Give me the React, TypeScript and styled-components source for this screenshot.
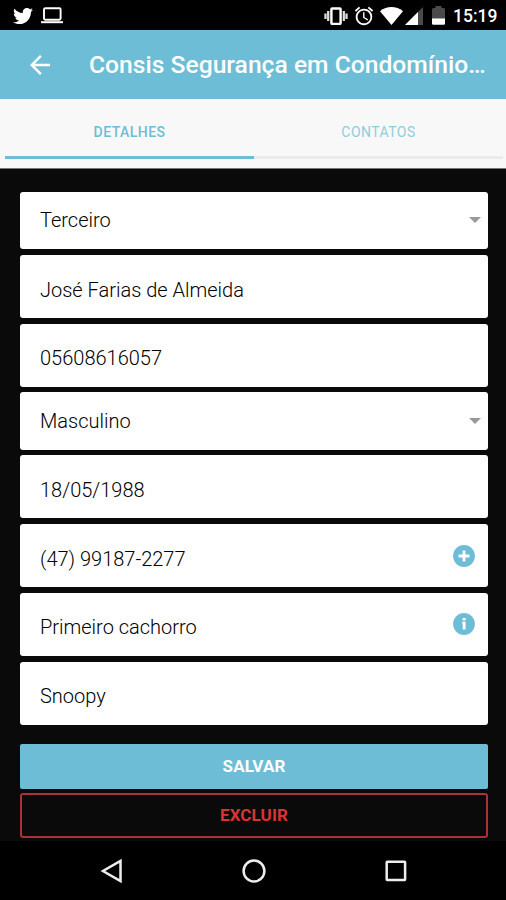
import React, { useState } from "react";
import styled, { createGlobalStyle, ThemeProvider } from "styled-components";
import { FaTwitter } from "react-icons/fa";
import { MdAlarm, MdArrowBack } from "react-icons/md";

const theme = {
  primary: "#6cbdd5",
  danger: "#d93434",
  background: "#0a0a0a",
  surface: "#f8f8f8",
};

type Field = {
  name: string;
  value: string;
  kind: "select" | "input";
  action?: "add" | "info";
};

const fields: Field[] = [
  { name: "type", value: "Terceiro", kind: "select" },
  { name: "name", value: "José Farias de Almeida", kind: "input" },
  { name: "document", value: "05608616057", kind: "input" },
  { name: "gender", value: "Masculino", kind: "select" },
  { name: "birthday", value: "18/05/1988", kind: "input" },
  { name: "phone", value: "(47) 99187-2277", kind: "input", action: "add" },
  { name: "question", value: "Primeiro cachorro", kind: "input", action: "info" },
  { name: "answer", value: "Snoopy", kind: "input" },
];

const tabs = ["Detalhes", "Contatos"];

const App: React.FC = () => {
  const [activeTab, setActiveTab] = useState(tabs[0]);

  return (
    <ThemeProvider theme={theme}>
      <GlobalStyle />
      <Screen>
        <StatusBar>
          <FaTwitter size={20} />
          <LaptopIcon />
          <Spacer />
          <VibrateIcon />
          <AlarmIcon size={22} />
          <WifiIcon />
          <SignalIcon />
          <BatteryIcon />
          <Clock>15:19</Clock>
        </StatusBar>
        <Header>
          <BackButton aria-label="Voltar">
            <MdArrowBack size={30} />
          </BackButton>
          <Title>Consis Segurança em Condomínio…</Title>
        </Header>
        <Tabs>
          {tabs.map(tab => (
            <Tab key={tab} $active={tab === activeTab} onClick={() => setActiveTab(tab)}>
              {tab}
            </Tab>
          ))}
        </Tabs>
        <Form>
          {fields.map(field => (
            <FieldBox key={field.name} $kind={field.kind}>
              <Value>{field.value}</Value>
              {field.kind === "select" && <Caret />}
              {field.action && <ActionIcon action={field.action} />}
            </FieldBox>
          ))}
          <Buttons>
            <SaveButton>Salvar</SaveButton>
            <DeleteButton>Excluir</DeleteButton>
          </Buttons>
        </Form>
        <NavBar>
          <svg width="24" height="26" viewBox="0 0 24 26">
            <path d="M20.5 3v20L3 13z" />
          </svg>
          <svg width="26" height="26" viewBox="0 0 26 26">
            <circle cx="13" cy="13" r="10.4" />
          </svg>
          <svg width="24" height="26" viewBox="0 0 24 26">
            <rect x="2.7" y="3.7" width="18.4" height="18.4" rx="0.5" />
          </svg>
        </NavBar>
      </Screen>
    </ThemeProvider>
  );
};

const LaptopIcon: React.FC = () => (
  <Laptop width="22" height="17" viewBox="0 0 22 17">
    <rect x="3" y="1.2" width="16.6" height="11.6" rx="1.2" fill="none" stroke="#fff" strokeWidth="1.9" />
    <rect x="0" y="14.2" width="22" height="2" fill="#fff" />
  </Laptop>
);

const VibrateIcon: React.FC = () => (
  <svg width="24" height="18" viewBox="0 0 24 18">
    <rect x="7.4" y="1.5" width="9.2" height="15.4" rx="0.8" fill="none" stroke="#fff" strokeWidth="2.4" />
    <path d="M4.2 4v10M19.8 4v10M1.5 6.5v5.5M22.5 6.5v5.5" stroke="#ddd" strokeWidth="2.3" />
  </svg>
);

const WifiIcon: React.FC = () => (
  <Wifi width="23" height="18" viewBox="0 0 23 18">
    <path d="M0 4.3C6.8-1.3 16.2-1.3 23 4.3L11.5 18z" fill="#fff" />
  </Wifi>
);

const SignalIcon: React.FC = () => (
  <svg width="18" height="18" viewBox="0 0 18 18">
    <path d="M18 0v18H0z" fill="#4a4a4a" />
    <path d="M13 5v13H0z" fill="#fff" />
  </svg>
);

const BatteryIcon: React.FC = () => (
  <Battery width="13" height="19" viewBox="0 0 13 19">
    <path d="M0 3.5q0-1.5 1.5-1.5H3.5V0H9.5V2H11.5Q13 2 13 3.5V13H0z" fill="#4a4a4a" />
    <path d="M0 12.5h13v5q0 1.3-1.3 1.3H1.3Q0 18.8 0 17.5z" fill="#fff" />
  </Battery>
);

const ActionIcon: React.FC<{ action: "add" | "info" }> = ({ action }) => (
  <Action width="22" height="22" viewBox="0 0 22 22">
    <circle cx="11" cy="11" r="10.9" />
    {action === "add" ? (
      <Glyph d="M9.6 5.5h2.8v4.1h4.1v2.8h-4.1v4.1H9.600v-4.100H5.500V9.600h4.100z" />
    ) : (
      <Glyph d="M9.6 5h3v2.4h-3zM9 8.8h3.600v7.700H9.700v-5.900H9z" />
    )}
  </Action>
);

const GlobalStyle = createGlobalStyle`
  * {
    box-sizing: border-box;
  }

  body {
    margin: 0;
    background-color: #000;
    font-family: Roboto, sans-serif;
  }

  button {
    border: none;
    padding: 0;
    background: none;
    font-family: inherit;
  }
`;

const Screen = styled.div`
  display: flex;
  flex-direction: column;
  width: 506px;
  height: 900px;
  overflow: hidden;
`;

const StatusBar = styled.div`
  display: flex;
  align-items: center;
  flex-shrink: 0;
  height: 30px;
  padding: 1px 9px 0 13px;
  color: white;
  background-color: black;
`;

const Spacer = styled.div`
  flex: 1;
`;

const Laptop = styled.svg`
  margin-left: 8px;
`;

const AlarmIcon = styled(MdAlarm)`
  margin-left: 5px;
`;

const Wifi = styled.svg`
  margin: 0 2px 0 5px;
`;

const Battery = styled.svg`
  margin-left: 9px;
`;

const Clock = styled.span`
  width: 44px;
  margin-left: 8px;
  font-size: 17.5px;
  font-weight: 500;
  white-space: nowrap;
`;

const Header = styled.header`
  display: flex;
  align-items: center;
  flex-shrink: 0;
  height: 69px;
  padding-left: 25px;
  color: white;
  background-color: ${props => props.theme.primary};
`;

const BackButton = styled.button`
  display: flex;
  color: white;
`;

const Title = styled.h1`
  margin: 0 0 0 34px;
  font-size: 24.65px;
  font-weight: 500;
  white-space: nowrap;
`;

const Tabs = styled.nav`
  display: flex;
  flex-shrink: 0;
  height: 70px;
  padding: 0 3px 9px 5px;
  background-color: ${props => props.theme.surface};
  border-bottom: 1px solid #777;
`;

const Tab = styled.button<{ $active: boolean }>`
  flex: 1;
  padding-top: 9px;
  font-size: 14px;
  font-weight: ${props => (props.$active ? 500 : 400)};
  letter-spacing: 0.45px;
  text-transform: uppercase;
  color: ${props => (props.$active ? props.theme.primary : "#8fcddd")};
  border-bottom: ${props => (props.$active ? `3px solid ${props.theme.primary}` : "3px solid #ebebeb")};
`;

const Form = styled.main`
  display: flex;
  flex-direction: column;
  gap: 5.65px;
  flex-shrink: 0;
  height: 672px;
  padding: 23.2px 18px 0 20px;
  background-color: ${props => props.theme.background};
`;

const FieldBox = styled.div<{ $kind: "select" | "input" }>`
  display: flex;
  align-items: center;
  justify-content: space-between;
  flex-shrink: 0;
  height: ${props => (props.$kind === "select" ? "57.2px" : "63.1px")};
  padding: ${props => (props.$kind === "select" ? "0 7px 1px 20px" : "6px 13px 0 20px")};
  background-color: white;
  border-radius: 3px;
`;

const Value = styled.span`
  font-size: 20px;
  font-weight: 300;
  color: #000;
`;

const Caret = styled.span`
  width: 0;
  height: 0;
  border-left: 6px solid transparent;
  border-right: 6px solid transparent;
  border-top: 6px solid #999;
`;

const Action = styled.svg`
  margin-bottom: 6px;
  fill: ${props => props.theme.primary};
`;

const Glyph = styled.path`
  fill: white;
`;

const Buttons = styled.div`
  display: flex;
  flex-direction: column;
  gap: 4px;
  margin-top: 13.7px;
`;

const SaveButton = styled.button`
  height: 45px;
  font-size: 17px;
  font-weight: 700;
  letter-spacing: 0.1px;
  text-transform: uppercase;
  color: white;
  background-color: ${props => props.theme.primary};
  border-radius: 2px;
`;

const DeleteButton = styled(SaveButton)`
  color: ${props => props.theme.danger};
  background-color: transparent;
  border: 2px solid #a83236;
  border-radius: 3px;
`;

const NavBar = styled.footer`
  display: flex;
  align-items: center;
  justify-content: space-between;
  flex: 1;
  padding: 1px 98px 0 100px;
  background-color: black;

  svg {
    fill: none;
    stroke: #eee;
    stroke-width: 2.5;
  }
`;

export default App;
